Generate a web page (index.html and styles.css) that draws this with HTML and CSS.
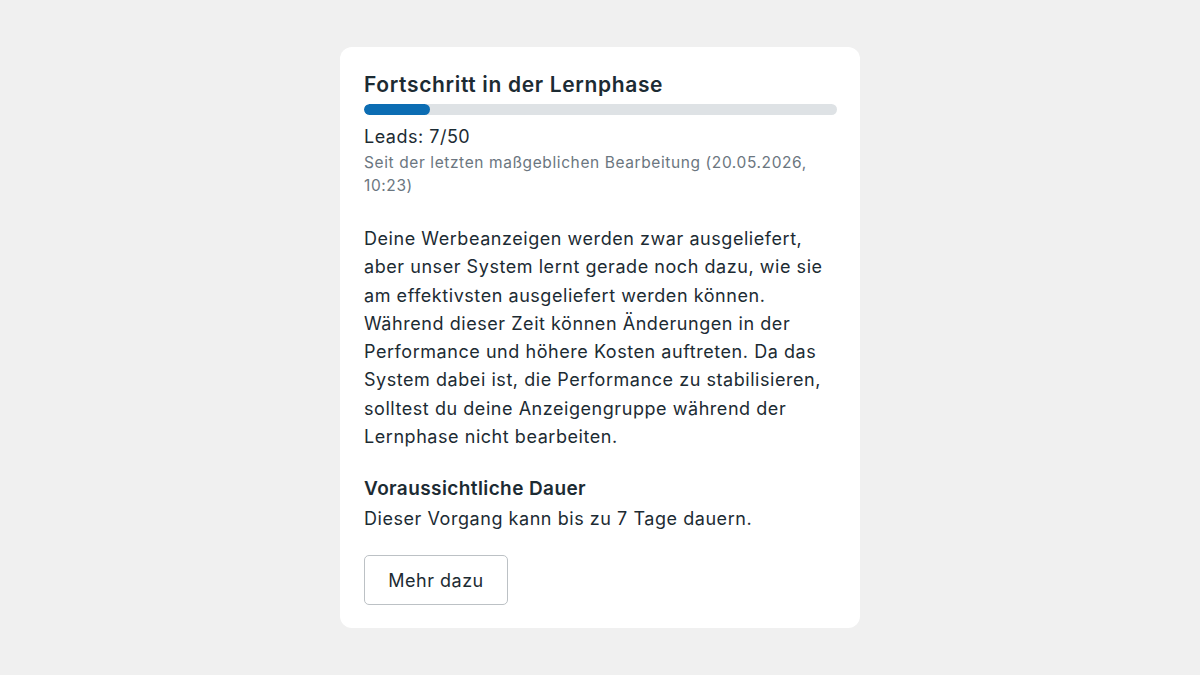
FILE: index.html
```html
<!DOCTYPE html>
<html lang="de">
<head>
  <meta charset="UTF-8">
  <meta name="viewport" content="width=device-width, initial-scale=1">
  <title>Fortschritt in der Lernphase</title>
  <link rel="stylesheet" href="styles.css">
</head>
<body>
  <div class="card">
    <h1 class="title">Fortschritt in der Lernphase</h1>
    <div class="progress">
      <div class="progress-fill" style="width: 14%"></div>
    </div>
    <p class="leads">Leads: 7/50</p>
    <p class="since">Seit der letzten maßgeblichen Bearbeitung (20.05.2026, 10:23)</p>

    <p class="body-text">Deine Werbeanzeigen werden zwar ausgeliefert, aber unser System lernt gerade noch dazu, wie sie am effektivsten ausgeliefert werden können. Während dieser Zeit können Änderungen in der Performance und höhere Kosten auftreten. Da das System dabei ist, die Performance zu stabilisieren, solltest du deine Anzeigengruppe während der Lernphase nicht bearbeiten.</p>

    <h2 class="subtitle">Voraussichtliche Dauer</h2>
    <p class="duration">Dieser Vorgang kann bis zu 7 Tage dauern.</p>

    <button type="button" class="more-btn">Mehr dazu</button>
  </div>
</body>
</html>
```

FILE: styles.css
```css
/* Reset some defaults */
body, h1, h2, p, button { margin: 0; padding: 0; }
* { box-sizing: border-box; }

body {
  font-family: Inter, "Open Sans", Arial, sans-serif;
  background: #f0f0f0;
  color: #1c2b33;
  display: flex;
  justify-content: center;
  padding-top: 47px;
}

.card {
  width: 520px;
  background: #ffffff;
  border-radius: 12px;
  padding: 23px 23px 23px 24px;
}

.title {
  font-size: 21px;
  font-weight: 600;
  line-height: 30px;
  letter-spacing: 0.65px;
}

.progress {
  margin-top: 4px;
  height: 11px;
  background: #dee2e5;
  border-radius: 6px;
  overflow: hidden;
}

.progress-fill {
  height: 100%;
  background: #0c6db3;
  border-radius: 6px;
}

.leads {
  margin-top: 8px;
  font-size: 18px;
  line-height: 28px;
  letter-spacing: 0.5px;
}

.since {
  font-size: 15.5px;
  line-height: 23px;
  color: #6b7680;
  letter-spacing: 0.6px;
}

.body-text {
  margin-top: 28px;
  font-size: 18px;
  line-height: 28.3px;
  letter-spacing: 0.55px;
}

.subtitle {
  margin-top: 24px;
  font-size: 19px;
  font-weight: 600;
  line-height: 28px;
  letter-spacing: 0.4px;
}

.duration {
  margin-top: 2px;
  font-size: 18px;
  line-height: 28px;
  letter-spacing: 0.55px;
}

.more-btn {
  margin-top: 22px;
  width: 144px;
  height: 50px;
  background: #ffffff;
  border: 1px solid #bcc1c5;
  border-radius: 5px;
  font-family: inherit;
  font-size: 18px;
  letter-spacing: 0.5px;
  color: #1c2b33;
}
```
